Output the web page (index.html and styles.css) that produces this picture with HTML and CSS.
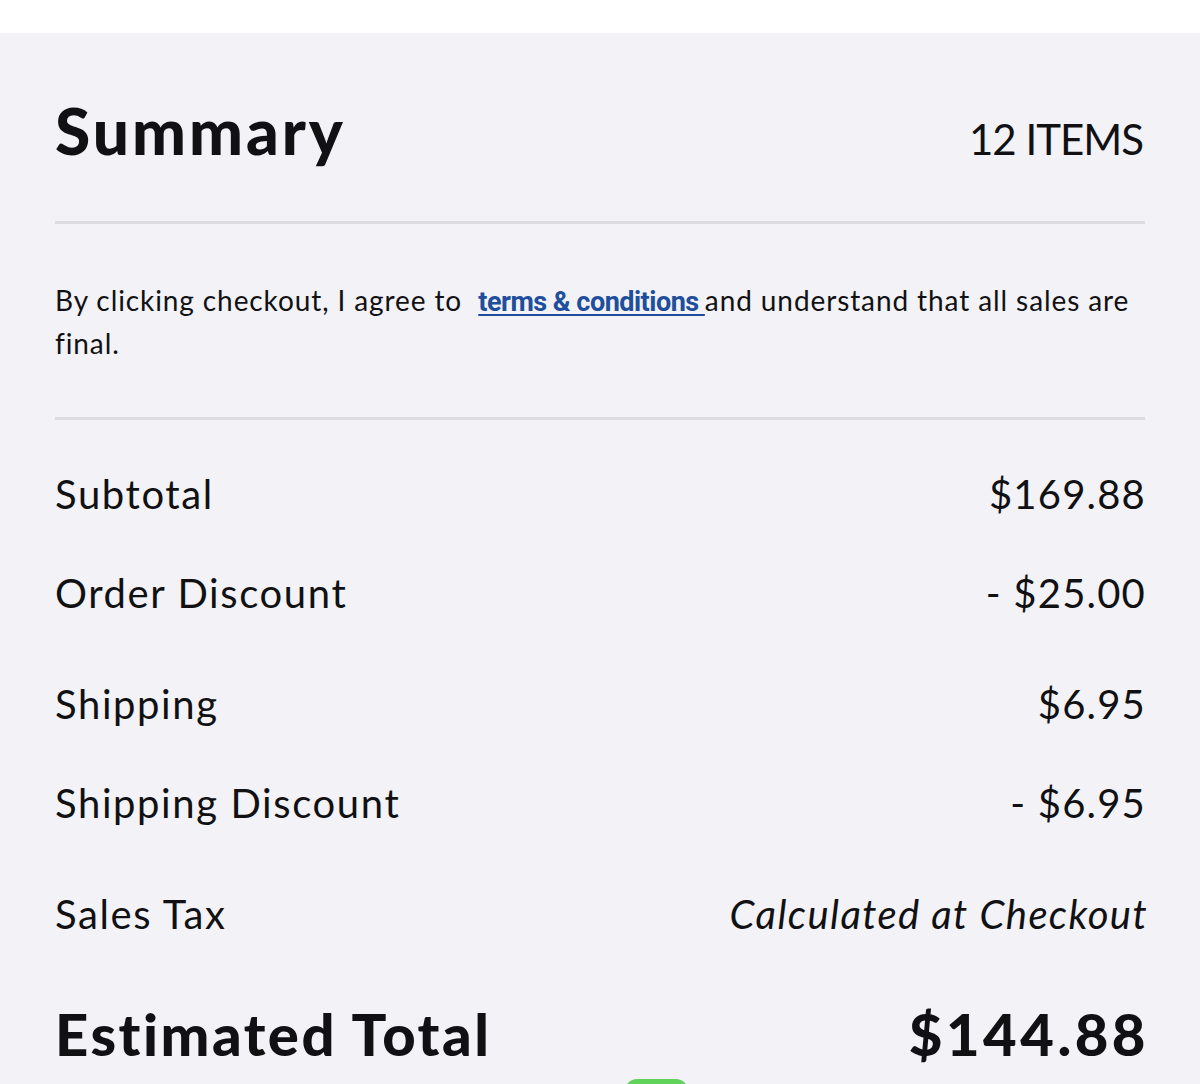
FILE: index.html
```html
<!DOCTYPE html>
<html lang="en">
<head>
<meta charset="utf-8">
<title>Summary</title>
<link rel="stylesheet" href="styles.css">
</head>
<body>
<div class="topbar"></div>
<main class="summary">
  <header class="summary-head">
    <h1 class="summary-title">Summary</h1>
    <span class="summary-count">12 ITEMS</span>
  </header>
  <hr class="divider">
  <p class="terms">By clicking checkout, I agree to &nbsp;<a class="terms-link" href="#">terms &amp; conditions </a>and understand that all sales are final.</p>
  <hr class="divider">
  <section class="lines">
    <div class="group">
      <div class="row"><span class="label">Subtotal</span><span class="value">$169.88</span></div>
      <div class="row"><span class="label">Order Discount</span><span class="value">- $25.00</span></div>
    </div>
    <div class="group">
      <div class="row"><span class="label">Shipping</span><span class="value">$6.95</span></div>
      <div class="row"><span class="label">Shipping Discount</span><span class="value">- $6.95</span></div>
    </div>
    <div class="group">
      <div class="row"><span class="label">Sales Tax</span><span class="value value-note">Calculated at Checkout</span></div>
    </div>
  </section>
  <div class="total">
    <span class="total-label">Estimated Total</span>
    <span class="total-value">$144.88</span>
  </div>
  <div class="pill"></div>
</main>
</body>
</html>
```
FILE: styles.css
```css
html, body {
  margin: 0;
  padding: 0;
  height: 1084px;
  overflow: hidden;
  background: #f2f2f7;
}
body {
  font-family: Lato, "Noto Sans", sans-serif;
  color: #111113;
}
.topbar {
  height: 33px;
  background: #ffffff;
}
.summary {
  padding: 58px 55px 0 55px;
  display: flex;
  flex-direction: column;
}
.summary-head {
  display: flex;
  justify-content: space-between;
  align-items: baseline;
  height: 80px;
}
.summary-title {
  margin: 0;
  font-size: 64px;
  line-height: 80px;
  font-weight: 900;
  letter-spacing: 3px;
}
.summary-count {
  font-size: 42px;
  line-height: 80px;
  font-weight: 400;
  letter-spacing: -1px;
  margin-right: 2px;
}
.divider {
  margin: 50px 0 0 0;
  border: 0;
  height: 3px;
  background: #dcdce1;
}
.terms {
  margin: 56px 0 0 0;
  font-size: 28px;
  line-height: 41px;
  letter-spacing: 0.9px;
}
.terms-link {
  color: #1f4f9c;
  font-family: "Liberation Sans Narrow", Roboto, sans-serif;
  font-weight: 700;
  font-size: 27px;
  text-decoration: underline;
  text-decoration-thickness: 2px;
  text-underline-offset: 3px;
  letter-spacing: -0.5px;
}
.terms + .divider {
  margin-top: 53px;
}
.lines {
  margin-top: 49px;
  display: flex;
  flex-direction: column;
  gap: 61px;
}
.group {
  display: flex;
  flex-direction: column;
  gap: 49px;
}
.row {
  display: flex;
  justify-content: space-between;
  align-items: baseline;
  height: 50px;
  font-size: 40px;
  line-height: 50px;
}
.label {
  letter-spacing: 1.6px;
}
.value {
  letter-spacing: 1.2px;
  margin-right: -1px;
}
.value-note {
  font-style: italic;
  letter-spacing: 1.4px;
  margin-right: -3px;
}
.total {
  margin-top: 60px;
  display: flex;
  justify-content: space-between;
  align-items: baseline;
  height: 70px;
  font-size: 58px;
  line-height: 70px;
  font-weight: 900;
}
.total-label {
  letter-spacing: 2.5px;
}
.total-value {
  letter-spacing: 3.5px;
  margin-right: -4px;
}
.pill {
  margin: 10px 0 0 570px;
  width: 63px;
  height: 30px;
  border-radius: 12px 12px 0 0;
  background: #5fd35a;
}
```
